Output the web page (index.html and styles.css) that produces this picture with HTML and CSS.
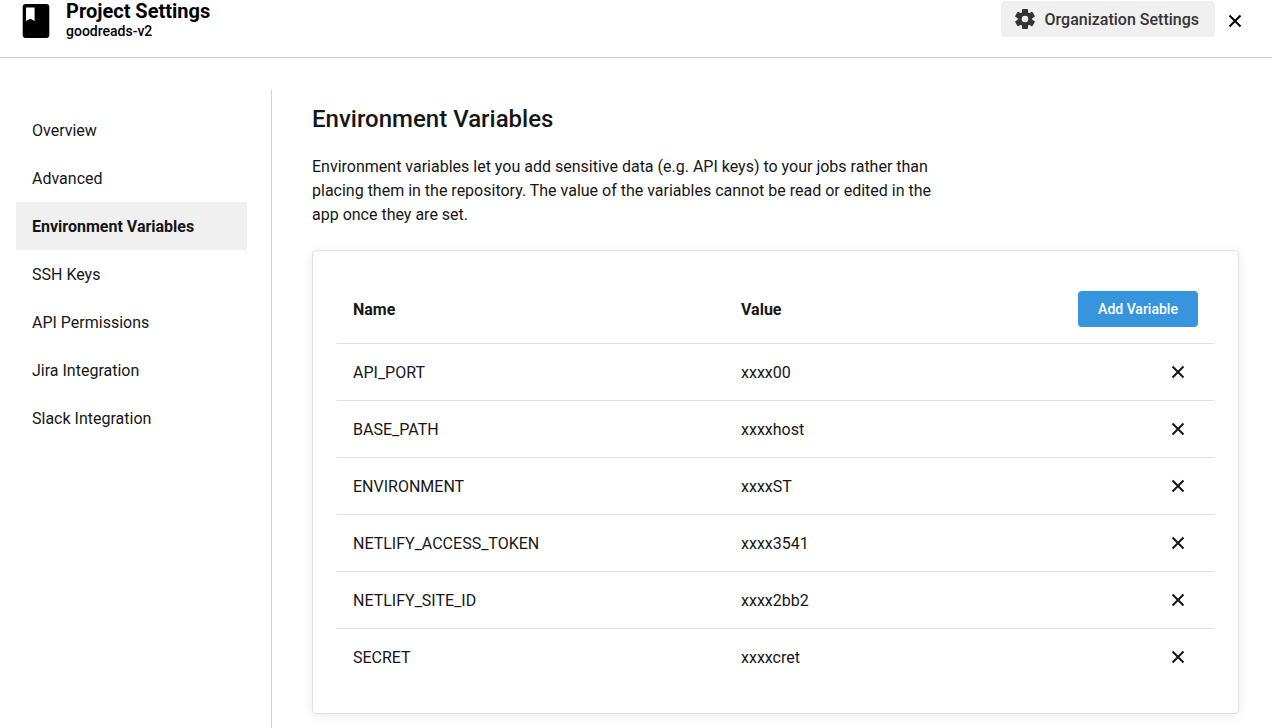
FILE: index.html
```html
<!DOCTYPE html>
<html lang="en">
<head>
<meta charset="utf-8">
<meta name="viewport" content="width=device-width, initial-scale=1">
<title>Project Settings</title>
<link rel="stylesheet" href="styles.css">
</head>
<body>
<svg class="sprite" aria-hidden="true">
  <symbol id="cross" viewBox="0 0 14 14"><path d="M1.5 1.5 12.5 12.5M12.5 1.5 1.5 12.5" fill="none" stroke="currentColor" stroke-width="2"/></symbol>
</svg>
<header class="header">
  <svg class="book" viewBox="0 0 28 34" aria-hidden="true"><path fill-rule="evenodd" d="M3.700 0H24.300A3 3 0 0 1 27.300 3V31A3 3 0 0 1 24.300 34H3.700A3 3 0 0 1 .7 31V3A3 3 0 0 1 3.700 0ZM4 3.400V17L8.300 14.800 12.600 17V3.400Z"/></svg>
  <div class="heading">
    <h1 class="title">Project Settings</h1>
    <p class="project">goodreads-v2</p>
  </div>
  <button class="org" type="button">
    <svg class="gear" viewBox="0 0 20 20" aria-hidden="true">
      <g id="teeth">
        <rect x="7" y="0" width="6" height="6" rx="1"/>
        <rect x="7" y="14" width="6" height="6" rx="1"/>
      </g>
      <use href="#teeth" transform="rotate(60 10 10)"/>
      <use href="#teeth" transform="rotate(120 10 10)"/>
      <circle cx="10" cy="10" r="5.300" fill="none" stroke="currentColor" stroke-width="4"/>
    </svg>
    Organization Settings
  </button>
  <button class="close" type="button" aria-label="Close"><svg class="cross"><use href="#cross"/></svg></button>
</header>
<div class="page">
  <nav class="sidebar">
    <a class="link" href="#">Overview</a>
    <a class="link" href="#">Advanced</a>
    <a class="link active" href="#" aria-current="page">Environment Variables</a>
    <a class="link" href="#">SSH Keys</a>
    <a class="link" href="#">API Permissions</a>
    <a class="link" href="#">Jira Integration</a>
    <a class="link" href="#">Slack Integration</a>
  </nav>
  <main class="main">
    <h2 class="section-title">Environment Variables</h2>
    <p class="intro">Environment variables let you add sensitive data (e.g. API keys) to your jobs rather than placing them in the repository. The value of the variables cannot be read or edited in the app once they are set.</p>
    <section class="card">
      <table class="vars">
        <thead>
          <tr><th class="name" scope="col">Name</th><th scope="col">Value</th><th class="action"><button class="add" type="button">Add Variable</button></th></tr>
        </thead>
        <tbody>
          <tr><td>API_PORT</td><td>xxxx00</td><td class="action"><button class="remove" type="button" aria-label="Remove API_PORT"><svg class="cross"><use href="#cross"/></svg></button></td></tr>
          <tr><td>BASE_PATH</td><td>xxxxhost</td><td class="action"><button class="remove" type="button" aria-label="Remove BASE_PATH"><svg class="cross"><use href="#cross"/></svg></button></td></tr>
          <tr><td>ENVIRONMENT</td><td>xxxxST</td><td class="action"><button class="remove" type="button" aria-label="Remove ENVIRONMENT"><svg class="cross"><use href="#cross"/></svg></button></td></tr>
          <tr><td>NETLIFY_ACCESS_TOKEN</td><td>xxxx3541</td><td class="action"><button class="remove" type="button" aria-label="Remove NETLIFY_ACCESS_TOKEN"><svg class="cross"><use href="#cross"/></svg></button></td></tr>
          <tr><td>NETLIFY_SITE_ID</td><td>xxxx2bb2</td><td class="action"><button class="remove" type="button" aria-label="Remove NETLIFY_SITE_ID"><svg class="cross"><use href="#cross"/></svg></button></td></tr>
          <tr><td>SECRET</td><td>xxxxcret</td><td class="action"><button class="remove" type="button" aria-label="Remove SECRET"><svg class="cross"><use href="#cross"/></svg></button></td></tr>
        </tbody>
      </table>
    </section>
  </main>
</div>
</body>
</html>
```
FILE: styles.css
```css
* { box-sizing: border-box; }

body {
  margin: 0;
  min-height: 100vh;
  display: flex;
  flex-direction: column;
  background: #fff;
  color: #161616;
  font: 16px/24px Roboto, sans-serif;
}

h1, h2, p { margin: 0; }

button {
  border: 0;
  padding: 0;
  background: none;
  color: inherit;
  font: inherit;
  cursor: pointer;
}

.sprite { display: none; }

.header {
  display: flex;
  align-items: flex-start;
  padding: 0 24px 16px 22px;
  border-bottom: 1px solid #d0d0d0;
  color: #000;
}

.book {
  width: 28px;
  height: 34px;
  margin-top: 4px;
}

.heading { flex: 1; margin-left: 16px; }

.title {
  font-size: 20px;
  line-height: 22px;
  font-weight: 700;
}

.project {
  font-size: 14px;
  line-height: 19px;
  font-weight: 500;
}

.org {
  display: flex;
  align-items: center;
  gap: 10px;
  margin-top: 1px;
  padding: 7px 16px 5px 14px;
  border-radius: 4px;
  background: #f0f0f0;
  color: #343434;
  font-weight: 500;
}

.gear {
  width: 20px;
  height: 20px;
  margin-bottom: 2px;
  fill: currentColor;
}

.close {
  display: grid;
  margin: 14px 6px 0 13px;
}

.cross {
  display: block;
  width: 14px;
  height: 14px;
}

.page {
  flex: 1;
  display: flex;
  padding-top: 32px;
}

.sidebar {
  width: 272px;
  flex: none;
  padding: 16px 24px 16px 16px;
  border-right: 1px solid #d0d0d0;
}

.link {
  display: block;
  padding: 13px 16px 11px;
  color: inherit;
  text-decoration: none;
}

.active {
  background: #f0f0f0;
  font-weight: 700;
}

.main {
  flex: 1;
  padding: 13px 33px 14px 40px;
}

.section-title {
  font-size: 24px;
  line-height: 32px;
  font-weight: 500;
}

.intro {
  max-width: 640px;
  margin: 20px 0 23px;
}

.card {
  padding: 24px 24px 28px;
  border: 1px solid #e0e0e0;
  border-radius: 4px;
  box-shadow: 0 2px 12px rgba(0, 0, 0, 0.08);
}

.vars {
  width: 100%;
  border-spacing: 0;
  table-layout: fixed;
}

.vars th, .vars td {
  padding: 17px 16px 15px;
  border-bottom: 1px solid #e0e0e0;
  text-align: left;
  vertical-align: middle;
}

.vars tbody tr:last-child td { border-bottom: 0; }

.vars .name { width: 388px; }

.vars .action {
  width: 152px;
  padding: 16px;
}

.add {
  display: block;
  width: 100%;
  height: 36px;
  border-radius: 4px;
  background: #3695dd;
  color: #fff;
  font-size: 14px;
  font-weight: 500;
}

.remove {
  display: grid;
  place-items: center;
  width: 40px;
  height: 24px;
  margin-left: auto;
}
```
